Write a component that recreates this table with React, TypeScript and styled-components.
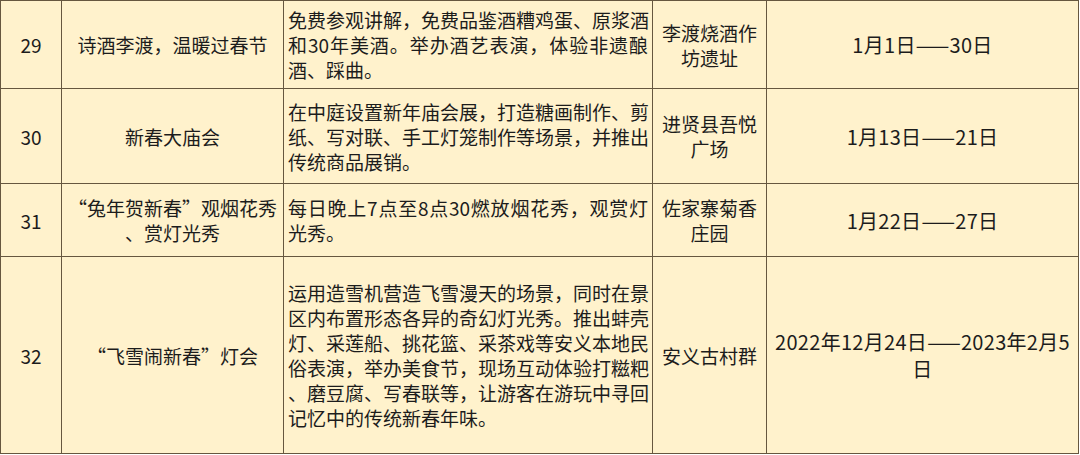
import React from "react";
import styled, { createGlobalStyle } from "styled-components";

const Global = createGlobalStyle`
  html, body { margin: 0; padding: 0; background: #ffffff; }
  body { font-family: "Noto Sans CJK SC", "Noto Sans", sans-serif; }
`;

const Table = styled.table`
  border-collapse: collapse;
  table-layout: fixed;
  width: 1078px;
  background: #fff2cc;
  color: #1c1c1c;
  font-size: 19px;
  line-height: 25px;
`;

const Col = styled.col<{ $w: number }>`
  width: ${(p) => p.$w}px;
`;

const Row = styled.tr<{ $h: number }>`
  height: ${(p) => p.$h}px;
`;

const Cell = styled.td`
  border: 1px solid #66573f;
  padding: 0 4px;
  vertical-align: middle;
  text-align: center;
  white-space: nowrap;
  overflow: hidden;
`;

const NumCell = styled(Cell)``;

const TitleCell = styled(Cell)``;

const DescCell = styled(Cell)`
  text-align: left;
`;

const PlaceCell = styled(Cell)``;

const DateCell = styled(Cell)`
  font-size: 20px;
  line-height: 27px;
  letter-spacing: 0.3px;
`;

const DescLine = styled.span<{ $justify: boolean }>`
  display: block;
  text-align: left;
  text-align-last: ${(p) => (p.$justify ? "justify" : "left")};
  text-justify: inter-character;
`;

const Lines = ({ lines }: { lines: string[] }) => (
  <>
    {lines.map((l, i) => (
      <React.Fragment key={i}>
        {i > 0 && <br />}
        {l}
      </React.Fragment>
    ))}
  </>
);

type Item = {
  no: string;
  title: string[];
  desc: string[];
  place: string[];
  date: string[];
  h: number;
};

const items: Item[] = [
  {
    no: "29",
    title: ["诗酒李渡，温暖过春节"],
    desc: ["免费参观讲解，免费品鉴酒糟鸡蛋、原浆酒", "和30年美酒。举办酒艺表演，体验非遗酿", "酒、踩曲。"],
    place: ["李渡烧酒作", "坊遗址"],
    date: ["1月1日——30日"],
    h: 88,
  },
  {
    no: "30",
    title: ["新春大庙会"],
    desc: ["在中庭设置新年庙会展，打造糖画制作、剪", "纸、写对联、手工灯笼制作等场景，并推出", "传统商品展销。"],
    place: ["进贤县吾悦", "广场"],
    date: ["1月13日——21日"],
    h: 95,
  },
  {
    no: "31",
    title: ["“兔年贺新春”观烟花秀", "、赏灯光秀"],
    desc: ["每日晚上7点至8点30燃放烟花秀，观赏灯", "光秀。"],
    place: ["佐家寨菊香", "庄园"],
    date: ["1月22日——27日"],
    h: 73,
  },
  {
    no: "32",
    title: ["“飞雪闹新春”灯会"],
    desc: [
      "运用造雪机营造飞雪漫天的场景，同时在景",
      "区内布置形态各异的奇幻灯光秀。推出蚌壳",
      "灯、采莲船、挑花篮、采茶戏等安义本地民",
      "俗表演，举办美食节，现场互动体验打糍粑",
      "、磨豆腐、写春联等，让游客在游玩中寻回",
      "记忆中的传统新春年味。",
    ],
    place: ["安义古村群"],
    date: ["2022年12月24日——2023年2月5", "日"],
    h: 197,
  },
];

const widths = [61, 222, 369, 114, 312];

export default function App() {
  return (
    <>
      <Global />
      <Table>
        <colgroup>
          {widths.map((w, i) => (
            <Col key={i} $w={w} />
          ))}
        </colgroup>
        <tbody>
          {items.map((it) => (
            <Row key={it.no} $h={it.h}>
              <NumCell>{it.no}</NumCell>
              <TitleCell>
                <Lines lines={it.title} />
              </TitleCell>
              <DescCell>
                {it.desc.map((l, i) => (
                  <DescLine key={i} $justify={i < it.desc.length - 1}>
                    {l}
                  </DescLine>
                ))}
              </DescCell>
              <PlaceCell>
                <Lines lines={it.place} />
              </PlaceCell>
              <DateCell>
                <Lines lines={it.date} />
              </DateCell>
            </Row>
          ))}
        </tbody>
      </Table>
    </>
  );
}
